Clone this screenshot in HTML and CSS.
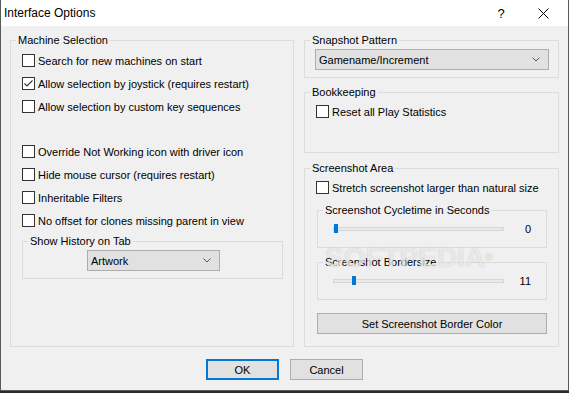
FILE: index.html
```html
<!DOCTYPE html>
<html lang="en">
<head>
    <meta charset="UTF-8">
    <title>Interface Options</title>
    <link rel="stylesheet" href="styles.css">
</head>
<body>
    <div class="window">
        <div class="titlebar">
            <span class="title">Interface Options</span>
            <span class="caption-btn help">?</span>
            <span class="caption-btn close">
                <svg width="11" height="11" viewBox="0 0 11 11"><path d="M0.5 0.5L10.5 10.5M10.5 0.5L0.5 10.5" stroke="#000" stroke-width="1" fill="none"/></svg>
            </span>
        </div>

        <div class="content">
            <div class="columns">
                <fieldset class="group machine">
                    <legend>Machine Selection</legend>
                    <div class="group-body">
                        <label class="check"><span class="box"></span>Search for new machines on start</label>
                        <label class="check"><span class="box">
                            <svg width="11" height="11" viewBox="0 0 11 11"><path d="M1.5 5.5L4 8L9.5 2.5" stroke="#333" stroke-width="1.1" fill="none"/></svg>
                        </span>Allow selection by joystick (requires restart)</label>
                        <label class="check"><span class="box"></span>Allow selection by custom key sequences</label>
                        <div class="spacer"></div>
                        <label class="check"><span class="box"></span>Override Not Working icon with driver icon</label>
                        <label class="check"><span class="box"></span>Hide mouse cursor (requires restart)</label>
                        <label class="check"><span class="box"></span>Inheritable Filters</label>
                        <label class="check"><span class="box"></span>No offset for clones missing parent in view</label>

                        <fieldset class="group history">
                            <legend>Show History on Tab</legend>
                            <div class="group-body">
                                <div class="combo short">
                                    <span>Artwork</span>
                                    <svg width="8" height="5" viewBox="0 0 8 5"><path d="M0.5 0.5L4 4L7.5 0.5" stroke="#555" fill="none"/></svg>
                                </div>
                            </div>
                        </fieldset>
                    </div>
                </fieldset>

                <div class="right-col">
                    <fieldset class="group snapshot">
                        <legend>Snapshot Pattern</legend>
                        <div class="group-body">
                            <div class="combo">
                                <span>Gamename/Increment</span>
                                <svg width="8" height="5" viewBox="0 0 8 5"><path d="M0.5 0.5L4 4L7.5 0.5" stroke="#555" fill="none"/></svg>
                            </div>
                        </div>
                    </fieldset>

                    <fieldset class="group bookkeeping">
                        <legend>Bookkeeping</legend>
                        <div class="group-body">
                            <label class="check"><span class="box"></span>Reset all Play Statistics</label>
                        </div>
                    </fieldset>

                    <fieldset class="group screenshot">
                        <legend>Screenshot Area</legend>
                        <div class="group-body">
                            <label class="check"><span class="box"></span>Stretch screenshot larger than natural size</label>

                            <fieldset class="group sub">
                                <legend>Screenshot Cycletime in Seconds</legend>
                                <div class="slider-row">
                                    <div class="track"><span class="thumb" style="left: 0px"></span></div>
                                    <span class="value">0</span>
                                </div>
                            </fieldset>

                            <fieldset class="group sub">
                                <legend>Screenshot Bordersize</legend>
                                <div class="slider-row">
                                    <div class="track"><span class="thumb" style="left: 18px"></span></div>
                                    <span class="value">11</span>
                                </div>
                            </fieldset>

                            <button class="btn wide">Set Screenshot Border Color</button>
                        </div>
                    </fieldset>
                </div>
            </div>

            <div class="actions">
                <button class="btn default">OK</button>
                <button class="btn">Cancel</button>
            </div>
        </div>

        <div class="watermark">SOFTPEDIA<span class="reg">®</span></div>
    </div>
</body>
</html>
```

FILE: styles.css
```css
* {
    box-sizing: border-box;
}

body {
    margin: 0;
    background: #2b2b2b;
    font-family: "Liberation Sans", Arial, sans-serif;
    font-size: 11px;
    color: #000;
}

.window {
    position: relative;
    width: 569px;
    height: 391px;
    background: #f0f0f0;
    border: 1px solid #5a5a5a;
    border-top: 0;
    overflow: hidden;
}

.titlebar {
    height: 26px;
    background: #fff;
    display: flex;
    align-items: center;
    padding: 0 10px 0 3px;
}

.title {
    font-size: 12px;
}

.caption-btn {
    width: 30px;
    display: flex;
    justify-content: center;
    align-items: center;
}

.help {
    margin-left: auto;
    font-size: 13px;
}

.close {
    margin-left: 12px;
}

.content {
    padding: 7px 9px 0;
}

.columns {
    display: flex;
    gap: 10px;
}

.group {
    margin: 0;
    padding: 0;
    border: 1px solid #dcdcdc;
    min-width: 0;
}

.group > legend {
    margin-left: 5px;
    padding: 0 2px;
    line-height: 15px;
}

.check {
    display: flex;
    align-items: center;
    height: 23px;
    white-space: nowrap;
}

.box {
    width: 13px;
    height: 13px;
    margin-right: 3px;
    border: 1px solid #333;
    background: #fff;
    flex: none;
    display: flex;
}

/* left column */
.machine {
    width: 284px;
    height: 314px;
}

.machine > .group-body {
    padding: 1px 0 0 11px;
}

.spacer {
    height: 22px;
}

.history {
    width: 261px;
    height: 45px;
    margin-top: 2px;
}

.history .group-body {
    padding-top: 1px;
}

.combo {
    display: flex;
    align-items: center;
    justify-content: space-between;
    height: 21px;
    padding: 0 8px 0 3px;
    background: #e1e1e1;
    border: 1px solid #adadad;
}

.combo.short {
    width: 133px;
    margin-left: 64px;
}

/* right column */
.right-col {
    width: 255px;
    display: flex;
    flex-direction: column;
}

.snapshot {
    height: 45px;
}

.snapshot .group-body {
    padding: 1px 9px 0 10px;
}

.bookkeeping {
    height: 68px;
    margin-top: 7px;
}

.bookkeeping .group-body {
    padding-left: 11px;
}

.screenshot {
    height: 186px;
    margin-top: 8px;
}

.screenshot > .group-body {
    padding-left: 11px;
}

.sub {
    width: 230px;
    height: 45px;
    margin: 4px 0 0 1px;
}

.sub + .sub {
    margin-top: 7px;
}

.slider-row {
    display: flex;
    align-items: center;
    height: 22px;
    padding-left: 15px;
}

.track {
    position: relative;
    width: 171px;
    height: 4px;
    background: #e7eaea;
    border: 1px solid #d6d6d6;
}

.thumb {
    position: absolute;
    top: -4px;
    width: 4px;
    height: 9px;
    background: #0078d7;
}

.value {
    width: 20px;
    margin-left: 7px;
    text-align: right;
}

.btn {
    font-family: inherit;
    font-size: 11px;
    color: #000;
    padding: 0;
    height: 21px;
    background: #e1e1e1;
    border: 1px solid #adadad;
}

.wide {
    display: block;
    width: 230px;
    margin: 13px 0 0 1px;
}

.actions {
    display: flex;
    justify-content: center;
    gap: 11px;
    margin-top: 12px;
}

.actions .btn {
    width: 73px;
}

.default {
    border: 2px solid #0078d7;
}

/* faint site watermark laid over the dialog */
.watermark {
    position: absolute;
    left: 324px;
    top: 244px;
    font-size: 28px;
    line-height: 28px;
    font-weight: bold;
    color: rgba(255, 255, 255, 0.7);
    text-shadow: 0 0 1px rgba(0, 0, 0, 0.25);
    pointer-events: none;
}

.watermark .reg {
    font-size: 10px;
    vertical-align: top;
}
```
